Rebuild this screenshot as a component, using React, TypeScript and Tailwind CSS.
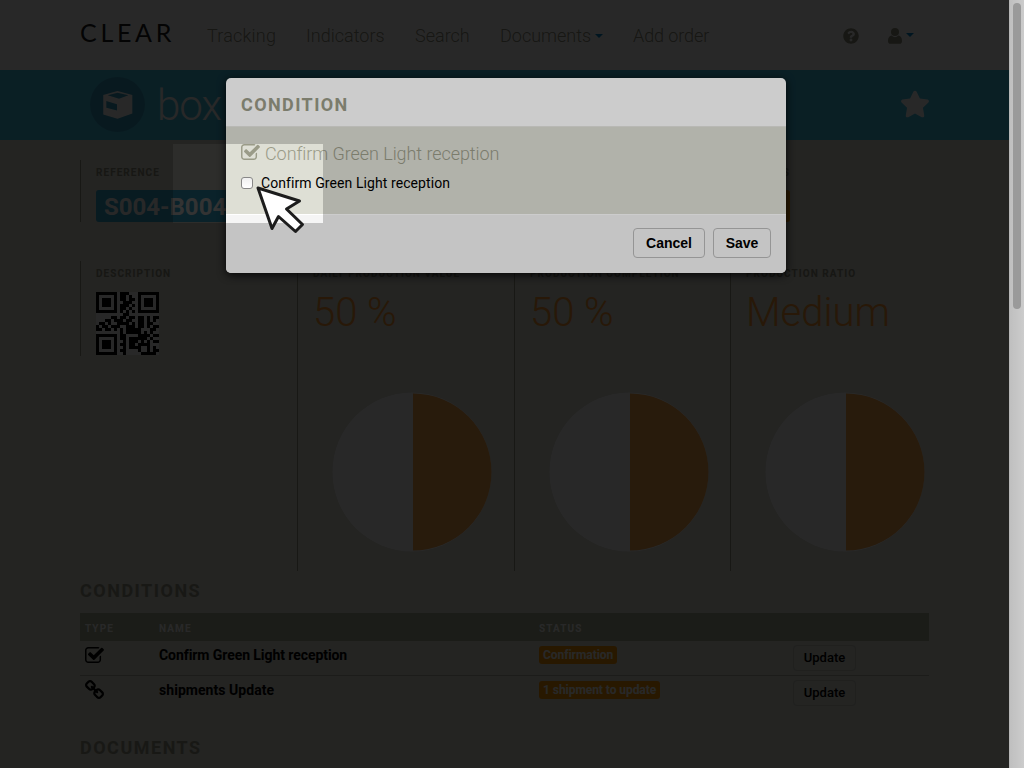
import React from "react";
import { FaQuestionCircle, FaStar } from "react-icons/fa";

const qrRows = [
  "111111101110001111111",
  "100000101101001000001",
  "101110101101101011101",
  "101110100111001011101",
  "101110101110101011101",
  "100000101101001000001",
  "111111101010101111111",
  "000000000110000000000",
  "000001101101101101011",
  "000110111011001101010",
  "011010011110101101100",
  "101101110011101101011",
  "110110101011111000110",
  "000000001011111010100",
  "111111101100001111011",
  "100000101101111110100",
  "101110100101110101011",
  "101110101101101111000",
  "101110100101111001010",
  "100000101100001001011",
  "111111100100000111110",
];

function CheckIcon({ className }: { className: string }) {
  return (
    <svg viewBox="64 128 1664 1408" className={className} fill="currentColor">
      <path d="M1472 930v318q0 119-84.5 203.5t-203.5 84.5h-832q-119 0-203.5-84.5t-84.5-203.5v-832q0-119 84.5-203.5t203.5-84.5h832q63 0 117 25 15 7 18 23 3 17-9 29l-49 49q-10 10-23 10-3 0-9-2-23-6-45-6h-832q-66 0-113 47t-47 113v832q0 66 47 113t113 47h832q66 0 113-47t47-113v-254q0-13 9-22l64-64q10-10 23-10 6 0 12 3 20 8 20 29zm231-489l-814 814q-24 24-57 24t-57-24l-430-430q-24-24-24-57t24-57l110-110q24-24 57-24t57 24l263 263 647-647q24-24 57-24t57 24l110 110q24 24 24 57t-24 57z" />
    </svg>
  );
}

function ChainIcon({ className }: { className: string }) {
  return (
    <svg viewBox="80 16 1632 1632" className={className} fill="currentColor">
      <path d="M1520 1216q0-40-28-68l-208-208q-28-28-68-28-42 0-72 32 3 3 19 18.5t21.5 21.5 15 19 13 25.5 3.5 27.5q0 40-28 68t-68 28q-15 0-27.5-3.5t-25.5-13-19-15-21.5-21.5-18.5-19q-33 31-33 73 0 40 28 68l206 207q27 27 68 27 40 0 68-26l147-146q28-28 28-67zm-703-705q0-40-28-68l-206-207q-28-28-68-28-39 0-68 27l-147 146q-28 28-28 67 0 40 28 68l208 208q27 27 68 27 42 0 72-31-3-3-19-18.5t-21.5-21.5-15-19-13-25.5-3.5-27.5q0-40 28-68t68-28q15 0 27.5 3.5t25.5 13 19 15 21.5 21.5 18.5 19q33-31 33-73zm895 705q0 120-85 203l-147 146q-83 83-203 83-121 0-204-85l-206-207q-83-83-83-203 0-123 88-209l-88-88q-86 88-208 88-120 0-204-84l-208-208q-84-84-84-204t85-203l147-146q83-83 203-83 121 0 204 85l206 207q83 83 83 203 0 123-88 209l88 88q86-88 208-88 120 0 204 84l208 208q84 84 84 204z" />
    </svg>
  );
}

function Caret() {
  return <span className="h-0 w-0 border-x-4 border-t-4 border-x-transparent border-t-[#0088cc]" />;
}

function Header() {
  return (
    <header className="flex h-[70px] items-start bg-white pl-20 text-[18px] leading-[22px] font-light text-[#8f907d]">
      <span className="mt-[17px] w-[127px] font-['Lato',sans-serif] text-[25px] leading-[30px] font-normal tracking-[3.700px] text-[#222]">
        CLEAR
      </span>
      <nav className="mt-[25px] flex whitespace-nowrap">
        <span className="w-[99px] tracking-[0.2px]">Tracking</span>
        <span className="w-[109px]">Indicators</span>
        <span className="w-[85px]">Search</span>
        <span className="flex w-[133px] items-center gap-1">
          Documents <Caret />
        </span>
        <span className="w-[210px] tracking-[-0.1px]">Add order</span>
      </nav>
      <FaQuestionCircle className="mt-7 h-4 w-4 text-[#8f907d]" />
      <span className="mt-7 ml-[29px] flex items-center gap-1">
        <svg viewBox="0 0 14 16" className="h-4 w-3.5" fill="currentColor">
          <circle cx="7" cy="4" r="4" />
          <path d="M3.6 7.6C1.3 8 0 10 0 13c0 2 1 2.800 2.600 2.800h8.800c1.600 0 2.600-.8 2.600-2.800 0-3-1.300-5-3.600-5.400a5 5 0 0 1-6.800 0z" />
        </svg>
        <span className="-mt-0.5 flex">
          <Caret />
        </span>
      </span>
    </header>
  );
}

function Banner() {
  return (
    <div className="flex h-[70px] items-center bg-[#44c2e7] pl-[90px] text-white">
      <span className="-mt-px flex h-[55px] w-[55px] items-center justify-center rounded-full bg-[#3aa2c3]">
        <svg viewBox="0 0 30 28" className="h-7 w-[30px]" fill="currentColor">
          <path
            fillRule="evenodd"
            d="M14.500 0 29.300 4V22.500L14.500 27.700.300 23.500V4zM14.500 1.700 4.700 4.300 16 7.700 25.500 4.300zM3.300 10V16.700L14 19.500V13.300z"
          />
        </svg>
      </span>
      <span className="mt-0.5 ml-3 w-[743px] text-[42px] leading-[50px] font-light tracking-[-1px]">box</span>
      <FaStar className="-mt-0.5 h-7 w-[30px]" />
    </div>
  );
}

function Label({ children }: { children: React.ReactNode }) {
  return (
    <div className="text-[10px] leading-[13px] font-bold tracking-[1.050px] whitespace-nowrap text-[#8f907d] uppercase">
      {children}
    </div>
  );
}

function Indicator({ title, value }: { title: string; value: string }) {
  return (
    <div className="h-[310px] border-l border-[#9a9b88] pt-1.5 pl-[15px]">
      <Label>{title}</Label>
      <div className="mt-2 text-[40px] leading-[50px] font-light text-[#fa9a33]">{value}</div>
      <svg viewBox="0 0 160 160" className="mt-[54px] ml-[19px] h-40 w-40">
        <circle cx="80" cy="80" r="79.500" fill="#fff" />
        <path d="M81 1.500A78.500 78.500 0 0 1 81 158.500z" fill="#f8a850" />
      </svg>
    </div>
  );
}

function ConditionRow({ icon, name, status }: { icon: React.ReactNode; name: React.ReactNode; status: string }) {
  return (
    <div className="flex h-[35px] items-start border-b border-[#b4b5a5] pt-1 pl-[5px] last:border-0">
      <span className="w-[74px]">{icon}</span>
      <span className="w-[380px] text-[14px] leading-5 font-bold text-black">{name}</span>
      <span className="flex w-[254px] pt-px">
        <span className="rounded-[3px] bg-[#ff9a05] px-1 text-[12px] leading-[18px] font-bold tracking-[-0.05px] text-white">
          {status}
        </span>
      </span>
      <button className="h-[26px] w-[63px] rounded-[4px] border border-[#c8c9be] text-[13px] leading-6 font-medium text-black">
        Update
      </button>
    </div>
  );
}

function PageContent() {
  return (
    <main className="px-20">
      <div className="flex h-[121px] pt-5">
        <div className="h-[62px] w-[433px] border-l border-[#9a9b88] pt-1.5 pl-[15px]">
          <Label>Reference</Label>
          <div className="mt-[11px] h-8 w-[190px] rounded-[3px] bg-[#32a8d0] pl-2 text-[24px] leading-[34px] font-bold text-white">
            S004-B004
          </div>
        </div>
        <div className="flex h-[62px] w-[277px] flex-col items-end pt-1.5">
          <Label>Conditions</Label>
          <div className="mt-[11px] h-8 w-[110px] rounded-[3px] bg-[#ff9a05]" />
        </div>
      </div>
      <div className="grid grid-cols-[217px_217px_216px_199px]">
        <div className="h-[95px] border-l border-[#9a9b88] pt-1.5 pl-[15px]">
          <Label>Description</Label>
          <svg viewBox="0 0 21 21" shapeRendering="crispEdges" className="mt-3 h-[63px] w-[63px]">
            <rect width="21" height="21" fill="#fff" />
            {qrRows.flatMap((row, y) =>
              [...row].map((cell, x) => (cell === "1" ? <rect key={`${x}-${y}`} x={x} y={y} width="1" height="1" /> : null))
            )}
          </svg>
        </div>
        <Indicator title="Daily production value" value="50 %" />
        <Indicator title="Production completion" value="50 %" />
        <Indicator title="Production ratio" value="Medium" />
      </div>
      <h2 className="mt-2 h-[34px] text-[18px] leading-6 font-bold tracking-[1.500px] text-[#9a9b88]">CONDITIONS</h2>
      <div className="flex h-7 w-[849px] items-center bg-[#a9af94] pt-0.5 pl-[5px] text-[10px] font-bold tracking-[1.100px] text-white">
        <span className="w-[74px]">TYPE</span>
        <span className="w-[380px]">NAME</span>
        <span>STATUS</span>
      </div>
      <div className="w-[849px]">
        <ConditionRow
          icon={<CheckIcon className="mt-0.5 h-4 w-[19px]" />}
          name={<span className="tracking-[-0.07px]">Confirm Green Light reception</span>}
          status="Confirmation"
        />
        <ConditionRow
          icon={<ChainIcon className="h-[19px] w-[19px]" />}
          name={<span className="tracking-[0.05px]">shipments Update</span>}
          status="1 shipment to update"
        />
      </div>
      <h2 className="mt-[25px] text-[18px] leading-6 font-bold tracking-[1.500px] text-[#9a9b88]">DOCUMENTS</h2>
    </main>
  );
}

function Modal() {
  return (
    <div className="absolute top-[78px] left-[226px] flex h-[195px] w-[560px] flex-col overflow-hidden rounded-[5px] bg-white shadow-[0_2px_8px_rgba(0,0,0,0.8)]">
      <div className="h-12 pt-[15px] pl-[15px] text-[18px] leading-6 font-bold tracking-[1.400px] text-[#9a9b88]">
        CONDITION
      </div>
      <div className="h-[88px] border-t border-[#e6e6e2] bg-[#dedfd5] px-[15px] pt-[15px]">
        <div className="flex h-6 items-center gap-[5px] text-[18px] leading-6 font-light tracking-[-0.07px] text-[#9a9b88]">
          <CheckIcon className="-mt-1 h-4 w-[19px]" />
          Confirm Green Light reception
        </div>
        <label className="mt-[7px] flex items-center gap-2 text-[14px] leading-5 tracking-[0.08px] text-black">
          <span className="h-3 w-3 rounded-[3px] border border-[#888] bg-linear-to-b from-[#f0f0f0] to-white" />
          Confirm Green Light reception
        </label>
      </div>
      <div className="flex flex-1 justify-end gap-2 border-t border-white bg-[#f5f5f5] pt-[13px] pr-[15px] font-['Liberation_Sans',sans-serif] text-[14px] font-bold text-black">
        <button className="h-[30px] w-[72px] rounded-[4px] border border-[#bbb]">Cancel</button>
        <button className="h-[30px] w-[58px] rounded-[4px] border border-[#bbb]">Save</button>
      </div>
    </div>
  );
}

export default function App() {
  return (
    <div className="relative flex h-[768px] w-[1024px] overflow-hidden bg-white font-['Roboto',sans-serif]">
      <div className="relative h-full w-[1009px] overflow-hidden bg-[#dfdfd5]">
        <Header />
        <Banner />
        <PageContent />
        <div className="absolute inset-0 bg-black/80" />
        <Modal />
      </div>
      <div className="h-full w-[15px] border-l border-[#e4e4e4] bg-linear-to-r from-[#f0f0f0] to-white pt-[3px] pl-[3px]">
        <div className="h-[306px] w-2 rounded-full bg-[#c1c1c1]" />
      </div>
      <div className="absolute top-36 left-[173px] h-[79px] w-[150px] shadow-[0_0_0_1100px_rgba(0,0,0,0.2)]" />
      <svg viewBox="0 0 50 50" className="absolute top-[185px] left-[255px] h-[50px] w-[50px]">
        <path
          d="M3 3 44.500 16 31.500 24 47.500 39.500 40.500 46.500 23.500 31.500 17 43.500z"
          fill="#fff"
          stroke="#1c1c1c"
          strokeWidth="3"
          strokeLinejoin="round"
        />
      </svg>
    </div>
  );
}
